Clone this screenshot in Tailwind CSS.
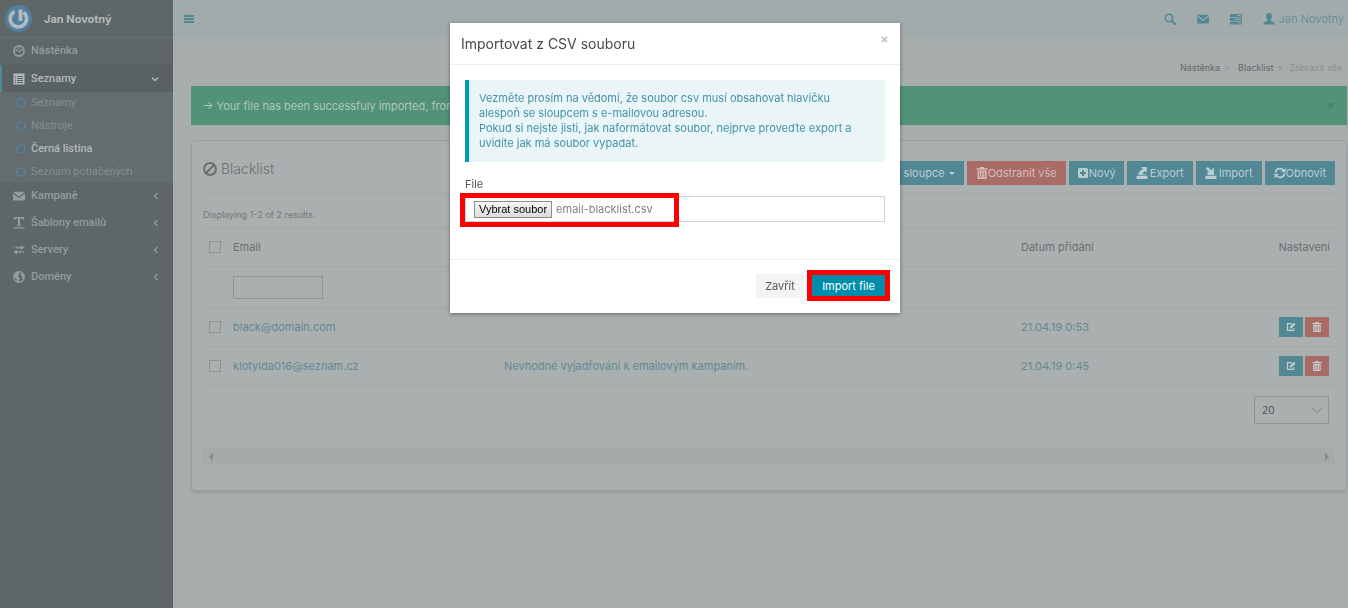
<!DOCTYPE html>
<html lang="cs">
<head>
    <meta charset="UTF-8">
    <meta name="viewport" content="width=device-width, initial-scale=1.0">
    <title>Blacklist</title>
    <script src="https://cdn.jsdelivr.net/npm/@tailwindcss/browser@4"></script>
</head>
<body class="min-h-screen flex bg-[#a8acac] font-['Inter',sans-serif] text-[11px] leading-4 text-[#6b6f71]">

    <!-- Icon sprite -->
    <svg class="hidden" xmlns="http://www.w3.org/2000/svg">
        <symbol id="gauge" viewBox="0 0 12 12"><circle cx="6" cy="6" r="5" fill="none" stroke="currentColor" stroke-width="1.8"/><path d="M2.600 4.500H4v1.200H2.600zM5.400 2.600h1.200V4H5.400zM8 4.500h1.400v1.200H8z" fill="currentColor"/><path d="M4 4.600l2.200 2.400 2.800-2.800" fill="none" stroke="currentColor" stroke-width="1.200"/></symbol>
        <symbol id="list" viewBox="0 0 12 12"><path fill="currentColor" fill-rule="evenodd" d="M.5.5h11v11H.5zM2 3v1h1V3zm2 0v1h6V3zM2 5v1h1V5zm2 0v1h6V5zM2 7v1h1V7zm2 0v1h6V7zM2 9v1h1V9zm2 0v1h6V9z"/></symbol>
        <symbol id="mail" viewBox="0 0 12 12"><path fill="currentColor" d="M0 1.8h12L6 6.8zM0 3.2l6 5 6-5V10.6H0z"/></symbol>
        <symbol id="text" viewBox="0 0 12 12"><path fill="currentColor" d="M1 0h10v3h-.8C10 1.8 9.500 1.500 7 1.500v6.300l1.500.5v.5h-5v-.5L5 7.800V1.500C2.500 1.500 2 1.800 1.800 3H1zM.5 10.300h11v1.300H.5z"/></symbol>
        <symbol id="transfer" viewBox="0 0 12 12"><path fill="currentColor" d="M1 2.800h1v1.600H1zM3 2.800h5V1.200l3.600 2.400L8 6V4.400H3zM11 7.200h-1v1.600h1zM9 7.200H4V5.800L.4 8 4 10.400V8.800h5z"/></symbol>
        <symbol id="globe" viewBox="0 0 12 12"><circle cx="6" cy="6" r="5.300" fill="none" stroke="currentColor" stroke-width="1.200"/><path fill="currentColor" d="M1 3.500L3.500.8 6 1l1 1-1.500 1.200L6 4.500 4.500 6l1.500.5 1 1.500-1.500 3.400L4 11l-.5-3L1 6zM8.500 1.500l2 2L11.300 6l-1 3-1.500-2 .2-1.500L7.800 4z"/></symbol>
        <symbol id="search" viewBox="0 0 12 12"><circle cx="5" cy="5" r="3.700" fill="none" stroke="currentColor" stroke-width="1.600"/><path d="M7.800 7.800L11 11" stroke="currentColor" stroke-width="2" stroke-linecap="round"/></symbol>
        <symbol id="tasks" viewBox="0 0 12 12"><path fill="currentColor" fill-rule="evenodd" d="M0 1h12v3H0zM0 4.700h12v3H0zM0 8.400h12v3H0zM7.500 2v1H11V2zM5 5.700v1h6v-1zM8.500 9.400v1H11v-1z"/></symbol>
        <symbol id="user" viewBox="0 0 12 12"><path fill="currentColor" d="M6 0c2 0 3 1.300 3 3.200C9 4.800 8.300 6 7.600 6.700v1C9 8.600 12 9.300 12 11.500H0c0-2.200 3-2.900 4.400-3.800v-1C3.700 6 3 4.800 3 3.200 3 1.300 4 0 6 0z"/></symbol>
        <symbol id="ban" viewBox="0 0 14 14"><circle cx="7" cy="7" r="5.900" fill="none" stroke="currentColor" stroke-width="2"/><path d="M3 11l8-8" stroke="currentColor" stroke-width="2"/></symbol>
        <symbol id="trash" viewBox="0 0 12 12"><path fill="currentColor" fill-rule="evenodd" d="M4 0h4v1.200h3.500v1.600H.5V1.200H4zM1.500 3.500h9V12h-9zM3 4.800v6h.7v-6zm1.900 0v6h.6v-6zm1.700 0v6h.6v-6zm1.700 0v6h.7v-6z"/></symbol>
        <symbol id="plus" viewBox="0 0 12 12"><path fill="currentColor" fill-rule="evenodd" d="M2.500 1h7Q11 1 11 2.500v7Q11 11 9.500 11h-7Q1 11 1 9.500v-7Q1 1 2.500 1zM5 3v2H3v2h2v2h2V7h2V5H7V3z"/></symbol>
        <symbol id="export" viewBox="0 0 12 12"><path fill="currentColor" d="M5 0h5.800v5.800L9 4 5.500 7.500h-3v-2L6.800 1.800zM.5 8.700h11V12H.5zM2.800 7.200h6.700V8H2.800z"/></symbol>
        <symbol id="import" viewBox="0 0 12 12"><path fill="currentColor" d="M1.500.8L3 0l3.200 3.200L8.800.4l.2 7.100H3.200L1.500 6l2.600-.8L1 2zM.5 8.700h11V12H.5zM2.800 7h6.700v1H2.800z"/></symbol>
        <symbol id="refresh" viewBox="0 0 12 12"><path d="M1.600 5.500A4.400 4.400 0 0 1 9.600 3.500M10.400 6.500A4.400 4.400 0 0 1 2.400 8.500" fill="none" stroke="currentColor" stroke-width="1.800"/><path fill="currentColor" d="M11.600.8v4.400H7.200zM.4 11.200V6.800h4.400z"/></symbol>
        <symbol id="edit" viewBox="0 0 12 12"><path d="M7 2H1.800v8h7.400V7.500" fill="none" stroke="currentColor" stroke-width="1.500"/><path fill="currentColor" d="M9.600.8l1.900 1.900-5 5.100H4.500V5.900z"/></symbol>
        <symbol id="chevron" viewBox="0 0 8 8"><path d="M5.500 1L2.500 4l3 3" fill="none" stroke="currentColor" stroke-width="1.300"/></symbol>
        <symbol id="chevron-down" viewBox="0 0 8 8"><path d="M.8 2.500L4 5.500l3.200-3" fill="none" stroke="currentColor" stroke-width="1.300"/></symbol>
        <symbol id="close" viewBox="0 0 8 8"><path d="M1 1l6 6M7 1L1 7" fill="none" stroke="currentColor" stroke-width="2"/></symbol>
    </svg>

    <!-- Sidebar -->
    <aside class="w-[173px] shrink-0 bg-[#5e6667] font-['Roboto',sans-serif] font-medium text-[11px] text-[#939d9f]">
        <div class="h-[38px] flex items-center gap-3 pl-[5px] border-b border-[#687071]">
            <svg class="size-[27px]" viewBox="0 0 27 27"><circle cx="13.500" cy="13.500" r="13.500" fill="#50809d"/><path d="M9.500 6.500A8.200 8.200 0 1 0 18.500 7.300" fill="none" stroke="#b3babd" stroke-width="3.600"/><path d="M13.500 4.500h4v11.500h-4z" fill="#b3babd"/></svg>
            <span class="font-['Inter',sans-serif] font-bold text-[#b4babb]">Jan Novotný</span>
        </div>
        <nav>
            <a href="#" class="h-[27px] flex items-center pl-[13px] gap-1.5 border-b border-[#5b6263]"><svg class="size-3"><use href="#gauge"/></svg>Nástěnka</a>
            <a href="#" class="h-[27px] flex items-center pl-[11px] pr-3.5 gap-1.5 border-l-2 border-[#4f8995] bg-[#5a6162] text-[#b3babb]"><svg class="size-3"><use href="#list"/></svg>Seznamy<svg class="size-2 ml-auto"><use href="#chevron-down"/></svg></a>
            <div class="grid gap-[2px] bg-[#636c6f] text-[#838e91] font-normal">
                <a href="#" class="h-[21px] flex items-center gap-[5px] pl-4"><svg class="size-[10px] text-[#587f9f]" viewBox="0 0 10 10"><circle cx="5" cy="5" r="4" fill="none" stroke="currentColor" stroke-width="1.600"/></svg>Seznamy</a>
                <a href="#" class="h-[21px] flex items-center gap-[5px] pl-4"><svg class="size-[10px] text-[#587f9f]" viewBox="0 0 10 10"><circle cx="5" cy="5" r="4" fill="none" stroke="currentColor" stroke-width="1.600"/></svg>Nástroje</a>
                <a href="#" class="h-[21px] flex items-center gap-[5px] pl-4 font-medium text-[#b3babb]"><svg class="size-[10px] text-[#587f9f]" viewBox="0 0 10 10"><circle cx="5" cy="5" r="4" fill="none" stroke="currentColor" stroke-width="1.600"/></svg>Černá listina</a>
                <a href="#" class="h-[21px] flex items-center gap-[5px] pl-4"><svg class="size-[10px] text-[#587f9f]" viewBox="0 0 10 10"><circle cx="5" cy="5" r="4" fill="none" stroke="currentColor" stroke-width="1.600"/></svg>Seznam potlačených</a>
            </div>
            <a href="#" class="h-[27px] flex items-center pl-[13px] pr-[13px] gap-1.5"><svg class="size-3"><use href="#mail"/></svg>Kampaně<svg class="size-2 ml-auto"><use href="#chevron"/></svg></a>
            <a href="#" class="h-[27px] flex items-center pl-[13px] pr-[13px] gap-1.5"><svg class="size-3"><use href="#text"/></svg>Šablony emailů<svg class="size-2 ml-auto"><use href="#chevron"/></svg></a>
            <a href="#" class="h-[27px] flex items-center pl-[13px] pr-[13px] gap-1.5"><svg class="size-3"><use href="#transfer"/></svg>Servery<svg class="size-2 ml-auto"><use href="#chevron"/></svg></a>
            <a href="#" class="h-[27px] flex items-center pl-[13px] pr-[13px] gap-1.5"><svg class="size-3"><use href="#globe"/></svg>Domény<svg class="size-2 ml-auto"><use href="#chevron"/></svg></a>
        </nav>
    </aside>

    <div class="flex-1 min-w-0">
        <!-- Top bar -->
        <header class="h-[38px] flex items-center pl-[11px] pr-1 bg-[#a2abac] border-b border-[#a5aaab] text-[#528894]">
            <button type="button" aria-label="Menu" class="grid gap-px"><span class="w-[10px] h-[2px] bg-[#528894]"></span><span class="w-[10px] h-[2px] bg-[#528894]"></span><span class="w-[10px] h-[2px] bg-[#528894]"></span></button>
            <div class="ml-auto flex items-center gap-[21px]">
                <a href="#" aria-label="Hledat"><svg class="size-3"><use href="#search"/></svg></a>
                <a href="#" aria-label="Zprávy"><svg class="size-3"><use href="#mail"/></svg></a>
                <a href="#" aria-label="Úlohy"><svg class="size-3"><use href="#tasks"/></svg></a>
                <a href="#" class="flex items-center gap-1 text-[#6b8f98]"><svg class="size-3 text-[#528894]"><use href="#user"/></svg>Jan Novotný</a>
            </div>
        </header>

        <main class="pl-[18px] pr-px">
            <nav class="h-12 flex items-center justify-end gap-1 pt-3 pr-[5px] text-[9px] text-[#8b9092]">
                <a href="#" class="text-[#65696b]">Nástěnka</a><span>&gt;</span>
                <a href="#" class="pl-1 text-[#65696b]">Blacklist</a><span>&gt;</span>
                <span class="pl-0.5">Zobrazit vše</span>
            </nav>

            <div class="h-[39px] flex items-center pl-3 pr-[13px] bg-[#529277] text-[#b0c8bd]">
                <span>→ Your file has been successfuly imported, from</span>
                <button type="button" aria-label="Zavřít" class="ml-auto text-[#47806a]"><svg class="size-[7px]"><use href="#close"/></svg></button>
            </div>

            <section class="mt-[15px] px-[11px] pb-[25px] rounded-sm border border-[#9a9fa1] bg-[#aaafaf] shadow-[0_2px_2px_#979c9e]">
                <div class="h-[53px] flex items-start justify-between pt-5 border-b border-[#a3a8aa]">
                    <h1 class="flex items-center gap-1 text-[14px] leading-4 font-light"><svg class="size-3.5"><use href="#ban"/></svg>Blacklist</h1>
                    <div class="flex gap-[3px] text-[#b9cdd1] whitespace-nowrap">
                        <button type="button" class="h-6 flex items-center gap-1 px-[9px] bg-[#528894]">sloupce<span class="border-x-[3px] border-t-[3px] border-x-transparent"></span></button>
                        <button type="button" class="h-6 flex items-center px-[9px] bg-[#a86b65] text-[#d5bdba]"><svg class="size-3"><use href="#trash"/></svg>Odstranit vše</button>
                        <button type="button" class="h-6 flex items-center px-2 bg-[#528894]"><svg class="size-3"><use href="#plus"/></svg>Nový</button>
                        <button type="button" class="h-6 flex items-center gap-0.5 px-[9px] bg-[#528894]"><svg class="size-3"><use href="#export"/></svg>Export</button>
                        <button type="button" class="h-6 flex items-center gap-0.5 px-[9px] bg-[#528894]"><svg class="size-3"><use href="#import"/></svg>Import</button>
                        <button type="button" class="h-6 flex items-center px-[9px] bg-[#528894]"><svg class="size-3"><use href="#refresh"/></svg>Obnovit</button>
                    </div>
                </div>

                <p class="h-[33px] flex items-center pt-2 text-[9px] text-[#73787a]">Displaying 1-2 of 2 results.</p>

                <table class="w-full table-fixed text-left text-[#648893]">
                    <thead class="text-[#6b6f71]">
                        <tr class="h-[39px] border-y border-[#a3a8aa]">
                            <th class="w-[30px] pl-1.5"><input type="checkbox" aria-label="Vybrat vše" class="block appearance-none size-3 border border-[#8e9395]"></th>
                            <th class="w-[271px] font-normal">Email</th>
                            <th></th>
                            <th class="w-[200px] font-normal">Datum přidání</th>
                            <th class="w-[114px] pr-[5px] text-right font-normal">Nastavení</th>
                        </tr>
                        <tr class="h-[41px] border-b border-[#a3a8aa]">
                            <td></td>
                            <td colspan="4"><input type="text" aria-label="Email" class="block w-[90px] h-[23px] border border-[#8e9395]"></td>
                        </tr>
                    </thead>
                    <tbody>
                        <tr class="h-[39px] border-b border-[#a3a8aa]">
                            <td class="pl-1.5"><input type="checkbox" aria-label="black@domain.com" class="block appearance-none size-3 border border-[#8e9395]"></td>
                            <td>black@domain.com</td>
                            <td></td>
                            <td>21.04.19 0:53</td>
                            <td class="pr-1.5"><div class="flex justify-end gap-[2px] text-[#c4cfd1]">
                                <button type="button" aria-label="Upravit" class="w-6 h-5 grid place-items-center bg-[#528894]"><svg class="size-[10px]"><use href="#edit"/></svg></button>
                                <button type="button" aria-label="Smazat" class="w-6 h-5 grid place-items-center bg-[#a86b65]"><svg class="size-[10px]"><use href="#trash"/></svg></button>
                            </div></td>
                        </tr>
                        <tr class="h-[39px] border-b border-[#a3a8aa]">
                            <td class="pl-1.5"><input type="checkbox" aria-label="klotylda016@seznam.cz" class="block appearance-none size-3 border border-[#8e9395]"></td>
                            <td>klotylda016@seznam.cz</td>
                            <td class="whitespace-nowrap">Nevhodné vyjadřování k emailovým kampaním.</td>
                            <td>21.04.19 0:45</td>
                            <td class="pr-1.5"><div class="flex justify-end gap-[2px] text-[#c4cfd1]">
                                <button type="button" aria-label="Upravit" class="w-6 h-5 grid place-items-center bg-[#528894]"><svg class="size-[10px]"><use href="#edit"/></svg></button>
                                <button type="button" aria-label="Smazat" class="w-6 h-5 grid place-items-center bg-[#a86b65]"><svg class="size-[10px]"><use href="#trash"/></svg></button>
                            </div></td>
                        </tr>
                    </tbody>
                </table>

                <div class="flex justify-end pt-[10px] pr-1.5">
                    <div class="relative">
                        <select aria-label="Počet na stránku" class="block appearance-none w-[75px] h-7 pl-[7px] border border-[#8e9395] font-['Open_Sans',sans-serif] text-[#505557]"><option>20</option></select>
                        <svg class="absolute right-1.5 top-2 w-3 h-3 text-[#7d8284]" viewBox="0 0 12 12"><path d="M1.500 4L6 8.500 10.500 4" fill="none" stroke="currentColor"/></svg>
                    </div>
                </div>

                <!-- Horizontal scrollbar -->
                <div class="mt-6 h-[17px] flex items-center justify-between px-1.5 bg-[#a5aaaa]">
                    <span class="border-y-4 border-r-4 border-y-transparent border-r-[#868b8d]"></span>
                    <span class="border-y-4 border-l-4 border-y-transparent border-l-[#868b8d]"></span>
                </div>
            </section>
        </main>
    </div>

    <!-- Import modal -->
    <div class="fixed inset-0 flex items-start justify-center pt-[23px] pl-0.5 text-[#555]">
        <form role="dialog" aria-labelledby="modalTitle" class="w-full max-w-[450px] bg-white shadow-[0_1px_4px_rgba(0,0,0,0.4)]">
            <div class="h-[42px] flex justify-between pl-[11px] pr-3 border-b border-[#efefef]">
                <h2 id="modalTitle" class="self-center text-[14px] text-[#484848]">Importovat z CSV souboru</h2>
                <button type="button" aria-label="Zavřít" class="self-start pt-[13px] text-[#c4c4c4]"><svg class="size-[7px]"><use href="#close"/></svg></button>
            </div>
            <div class="px-[15px] pt-[15px] pb-[37px]">
                <p class="py-[11px] pl-[10px] pr-4 border-l-4 border-[#0099b9] bg-[#eaf5f8] leading-[15px] text-[#4592a7]">
                    Vezměte prosím na vědomí, že soubor csv musí obsahovat hlavičku<br>alespoň se sloupcem s e-mailovou adresou.<br>
                    Pokud si nejste jisti, jak naformátovat soubor, nejprve proveďte export a<br>uvidíte jak má soubor vypadat.
                </p>
                <label for="file" class="block mt-3.5 mb-1">File</label>
                <div class="relative h-[26px] flex items-center pl-2 border border-[#cfd1dc]">
                    <input id="file" type="file" class="sr-only">
                    <label for="file" class="flex items-center gap-1 text-[#808080]">
                        <span class="h-[17px] px-1 border border-[#8d8d8d] bg-linear-to-b from-[#f6f6f6] to-[#dcdcdc] font-['Liberation_Sans',sans-serif] leading-[15px] text-black">Vybrat soubor</span>
                        email-blacklist.csv
                    </label>
                    <span class="absolute -left-1.5 -top-1 w-[219px] h-[34px] border-5 border-[#ff0000]"></span>
                </div>
            </div>
            <div class="flex justify-end gap-2 pt-3.5 pb-[15px] pr-[15px] border-t border-[#efefef]">
                <button type="button" class="w-12 h-6 bg-[#f3f3f3]">Zavřít</button>
                <div class="relative">
                    <button type="submit" class="w-[73px] h-6 bg-[#008dab] text-white">Import file</button>
                    <span class="absolute -inset-x-[5px] -top-1 h-[31px] border-5 border-[#ff0000]"></span>
                </div>
            </div>
        </form>
    </div>
</body>
</html>
